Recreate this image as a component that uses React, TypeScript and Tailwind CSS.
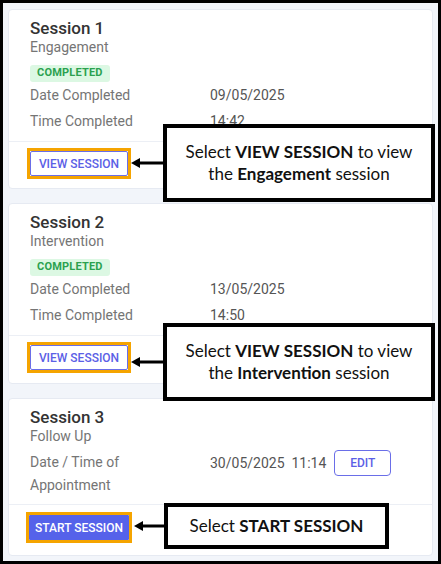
import React from 'react';

type Row = { label: string; value: React.ReactNode };

function Badge() {
  return (
    <span className="inline-flex items-center h-[17px] px-[7px] rounded-[3px] bg-[#dcf8e3] text-[#2ba14f] text-[11px] font-bold tracking-[0.2px]">
      COMPLETED
    </span>
  );
}

function Highlight({ children }: { children: React.ReactNode }) {
  return <div className="inline-flex border-[3px] border-[#f5a400]">{children}</div>;
}

function SessionCard({
  title,
  subtitle,
  completed,
  rows,
  action,
  footerPb,
}: {
  title: string;
  subtitle: string;
  completed?: boolean;
  rows: Row[];
  action: React.ReactNode;
  footerPb: string;
}) {
  return (
    <div className="bg-white border border-[#e6eaf2] rounded-[4px]">
      <div className="px-[21px] pt-[8px] pb-[7px]">
        <div className="text-[17px] leading-[20px] font-medium text-[#333]">{title}</div>
        <div className="text-[14px] leading-[19px] text-[#757575]">{subtitle}</div>
        {completed && (
          <div className="mt-[8px] flex">
            <Badge />
          </div>
        )}
        <div className="grid grid-cols-[180px_1fr]">
          {rows.map((r) => (
            <React.Fragment key={r.label}>
              <div className="min-h-[26px] flex items-center text-[14px] text-[#757575]">{r.label}</div>
              <div className="min-h-[26px] flex items-center text-[14px] text-[#555]">{r.value}</div>
            </React.Fragment>
          ))}
        </div>
      </div>
      <div className={`border-t border-[#eceff5] px-[18px] pt-[6px] ${footerPb}`}>{action}</div>
    </div>
  );
}

function Callout({ className, children }: { className: string; children: React.ReactNode }) {
  return (
    <div
      className={`absolute bg-white border-[4px] border-black flex flex-col items-center justify-center text-center text-[#111] text-[17px] leading-[22px] font-['Lato',sans-serif] ${className}`}
    >
      {children}
    </div>
  );
}

function Arrow({ className }: { className: string }) {
  return (
    <svg className={`absolute ${className}`} width="34" height="12" viewBox="0 0 34 12">
      <line x1="7" y1="6" x2="34" y2="6" stroke="black" strokeWidth="3" />
      <polygon points="0,6 9,1 9,11" fill="black" />
    </svg>
  );
}

export default function App() {
  return (
    <div className="relative w-[441px] h-[564px] border-[3px] border-black bg-[#f2f5fa] px-[5px] pt-[6px] font-['Roboto',sans-serif]">
      <div className="flex flex-col gap-[14px]">
        <SessionCard
          title="Session 1"
          subtitle="Engagement"
          completed
          rows={[
            { label: 'Date Completed', value: '09/05/2025' },
            { label: 'Time Completed', value: '14:42' },
          ]}
          footerPb="pb-[9px]"
          action={
            <Highlight>
              <button className="h-[25px] w-[98px] bg-white border border-[#6a6ee8] rounded-[2px] text-[#5b60e6] text-[12px] font-medium">
                VIEW SESSION
              </button>
            </Highlight>
          }
        />
        <SessionCard
          title="Session 2"
          subtitle="Intervention"
          completed
          rows={[
            { label: 'Date Completed', value: '13/05/2025' },
            { label: 'Time Completed', value: '14:50' },
          ]}
          footerPb="pb-[10px]"
          action={
            <Highlight>
              <button className="h-[25px] w-[98px] bg-white border border-[#6a6ee8] rounded-[2px] text-[#5b60e6] text-[12px] font-medium">
                VIEW SESSION
              </button>
            </Highlight>
          }
        />
        <div className="bg-white border border-[#e6eaf2] rounded-[4px]">
          <div className="px-[21px] pt-[8px] pb-[7px]">
            <div className="text-[17px] leading-[20px] font-medium text-[#333]">Session 3</div>
            <div className="text-[14px] leading-[19px] text-[#757575]">Follow Up</div>
            <div className="mt-[5px] grid grid-cols-[180px_1fr] items-start">
              <div className="w-[140px] text-[14px] leading-[23px] text-[#757575]">Date / Time of Appointment</div>
              <div className="flex items-center gap-[8px] -mt-[1px]">
                <span className="text-[14px] text-[#555] whitespace-pre">30/05/2025  11:14</span>
                <button className="h-[26px] w-[57px] border border-[#6a6ee8] rounded-[4px] text-[#5b60e6] text-[12px] font-medium">
                  EDIT
                </button>
              </div>
            </div>
          </div>
          <div className="border-t border-[#eceff5] px-[17px] pt-[7px] pb-[12px]">
            <Highlight>
              <button className="h-[25px] w-[100px] bg-[#5562ea] text-white text-[12px] font-medium rounded-[1px]">
                START SESSION
              </button>
            </Highlight>
          </div>
        </div>
      </div>

      <Arrow className="left-[128px] top-[154px]" />
      <Callout className="left-[160px] top-[121px] w-[272px] h-[78px]">
        <div>
          Select <b>VIEW SESSION</b> to view
        </div>
        <div>
          the <b>Engagement</b> session
        </div>
      </Callout>

      <Arrow className="left-[128px] top-[353px]" />
      <Callout className="left-[160px] top-[320px] w-[272px] h-[78px]">
        <div>
          Select <b>VIEW SESSION</b> to view
        </div>
        <div>
          the <b>Intervention</b> session
        </div>
      </Callout>

      <Arrow className="left-[131px] top-[517px]" />
      <Callout className="left-[161px] top-[500px] w-[225px] h-[46px]">
        <div>
          Select <b>START SESSION</b>
        </div>
      </Callout>
    </div>
  );
}
